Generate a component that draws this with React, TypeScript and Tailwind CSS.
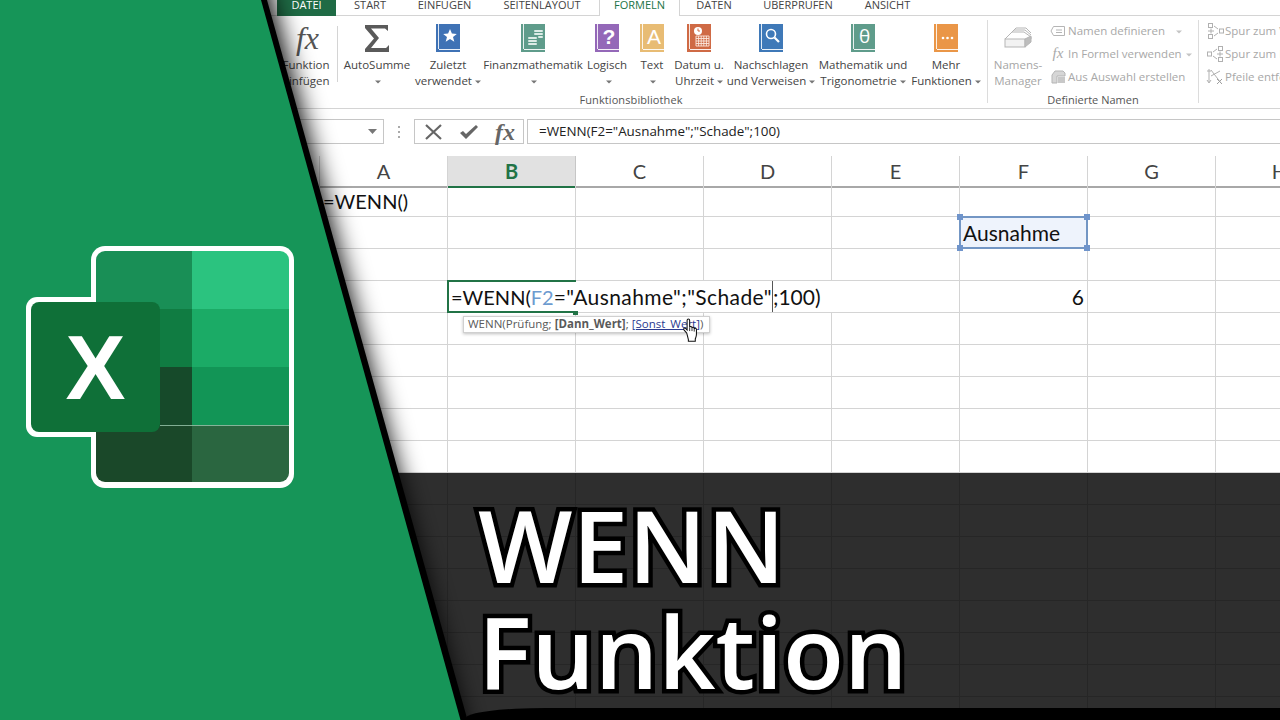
import type { ReactNode } from 'react';

const tabs = [
  { label: 'START', width: 'w-[64px]' },
  { label: 'EINFÜGEN', width: 'w-[85px]' },
  { label: 'SEITENLAYOUT', width: 'w-[110px]' },
];
const tabsRight = [
  { label: 'DATEN', width: 'w-[68px]' },
  { label: 'ÜBERPRÜFEN', width: 'w-[100px]' },
  { label: 'ANSICHT', width: 'w-[79px]' },
];

const columns = ['A', 'B', 'C', 'D', 'E', 'F', 'G', 'H'];
const rows = Array.from({ length: 17 }, (_, i) => i + 1);

const Caret = ({ color = '#777' }: { color?: string }) => (
  <svg width="6" height="4" viewBox="0 0 6 4" className="ml-[3px] inline-block align-middle">
    <path d="M0 0.5h6L3 3.5z" fill={color} />
  </svg>
);

const Book = ({ color, children }: { color: string; children: ReactNode }) => (
  <svg width="24" height="28" viewBox="0 0 24 28">
    <rect width="24" height="28" fill={color} />
    <rect x="2" y="0" width="1" height="25" fill="#fff" opacity="0.85" />
    <rect x="3" y="25" width="21" height="1" fill="#fff" opacity="0.9" />
    {children}
  </svg>
);

const RibbonButton = ({
  icon,
  lines,
  width,
  caret = true,
  muted = false,
}: {
  icon: ReactNode;
  lines: [string, string];
  width: string;
  caret?: boolean;
  muted?: boolean;
}) => (
  <div className={`flex flex-none flex-col items-center pt-2 ${width}`}>
    <div className="flex h-7 items-center justify-center">{icon}</div>
    <div
      className={`mt-[5px] whitespace-nowrap text-center text-[11.5px] leading-4 ${
        muted ? 'text-[#a6a6a6]' : 'text-[#444]'
      }`}
    >
      <div>{lines[0]}</div>
      <div>
        {lines[1]}
        {caret && <Caret />}
      </div>
    </div>
  </div>
);

const SmallRow = ({
  icon,
  text,
  caretGap,
}: {
  icon: ReactNode;
  text: string;
  caretGap?: string;
}) => (
  <div className="flex h-[23px] items-center whitespace-nowrap text-[11.5px] text-[#a8a8a8]">
    <span className="flex w-[20px] flex-none justify-center">{icon}</span>
    <span>{text}</span>
    {caretGap && (
      <span className={caretGap}>
        <Caret color="#c4c4c4" />
      </span>
    )}
  </div>
);

const NameTagIcon = () => (
  <svg width="16" height="12" viewBox="0 0 16 12" fill="none" stroke="#b5b5b5">
    <path d="M3.5 1.5h11v9h-11L1 6z" />
    <path d="M6 5h6M6 7.5h6" />
  </svg>
);
const FormulaTagIcon = () => (
  <span className="relative flex h-4 w-4 items-center justify-center text-[15px] leading-none text-[#aaa] [font-family:'Liberation_Serif',serif] italic">
    fx
  </span>
);
const SelectionIcon = () => (
  <svg width="15" height="14" viewBox="0 0 15 14">
    <path d="M4 1h8l2 2v3H6v7H1V5z" fill="#d6d6d6" stroke="#b5b5b5" />
    <rect x="7" y="7" width="7" height="6" fill="#c8c8c8" />
  </svg>
);
const TraceIcon = ({ flip = false }: { flip?: boolean }) => (
  <svg width="17" height="16" viewBox="0 0 17 16" fill="none" stroke="#b0b0b0" className={flip ? '-scale-x-100' : ''}>
    <rect x="1.5" y="0.5" width="4" height="4" />
    <rect x="1.5" y="11.5" width="4" height="4" />
    <rect x="12.5" y="6" width="4" height="4" />
    <path d="M1 8h6M4 5.5v5M7 3l4 3M7 13l4-3" />
  </svg>
);
const RemoveArrowsIcon = () => (
  <svg width="18" height="18" viewBox="0 0 18 18" fill="none" stroke="#b0b0b0">
    <path d="M3 1v13M1 12l2 3 2-3M1 3h4M5 2l10 13M5 8l9-5" />
    <path d="M11 11l5 5M16 11l-5 5" stroke="#a0a0a0" />
  </svg>
);

const HandCursor = () => (
  <svg width="17" height="26" viewBox="0 0 16 24" className="absolute left-[682px] top-[317px]">
    <path
      d="M4.5 15 2 12.2C1 11 2 9.5 3.4 10.5L4.8 12V3C4.8 1.3 7.2 1.3 7.2 3V9.5C7.2 8.4 9.4 8.4 9.4 9.8V10.2C9.4 9.2 11.5 9.2 11.5 10.6V11C11.5 10.1 13.6 10.2 13.6 11.6V16C13.6 18 13 19 12.5 20.5V22.5H6V21Z"
      fill="#fff"
      stroke="#111"
      strokeWidth="1"
    />
    <path d="M7.2 9.5v3.5M9.4 10v3M11.5 11v2.5" stroke="#111" strokeWidth="0.8" />
  </svg>
);

const Handle = ({ place }: { place: string }) => (
  <span className={`absolute h-[6px] w-[6px] bg-[#6f94cb] ${place}`} />
);

const Cell = ({ row, col }: { row: number; col: string }) => {
  if (row === 4 && col === 'B') {
    return (
      <div className="relative col-span-4 h-8 border-b border-r border-[#d4d4d4] bg-white">
        <div className="absolute -left-px -top-px z-10 h-[33px] w-[129px] border-2 border-r-0 border-[#217346]" />
        <span className="absolute left-[125px] top-[30px] z-10 h-[4px] w-[5px] bg-[#217346]" />
        <div className="flex h-[31px] items-center whitespace-nowrap pl-[3px] text-[20px] text-[#111]">
          =WENN(<span className="text-[#6d9bcf]">F2</span>
          <span className="text-[21px] tracking-[0.4px]">="Ausnahme";"Schade"</span>
          <span className="h-[31px] w-px bg-[#555]" />
          <span className="text-[21px]">;100)</span>
        </div>
      </div>
    );
  }
  if (row === 4 && (col === 'C' || col === 'D' || col === 'E')) return null;

  return (
    <div className="relative h-8 border-b border-r border-[#d4d4d4]">
      {row === 1 && col === 'A' && (
        <div className="flex h-[31px] items-center whitespace-nowrap pl-[3px] text-[20px] text-[#111]">=WENN()</div>
      )}
      {row === 2 && col === 'F' && (
        <div className="absolute -left-px -top-px z-10 flex h-[33px] w-[129px] items-center border-2 border-[#7396c4] bg-[#eef3fc] pl-[2px] text-[21px] text-[#111]">
          Ausnahme
          <Handle place="-left-[4px] -top-[4px]" />
          <Handle place="-right-[4px] -top-[4px]" />
          <Handle place="-bottom-[4px] -left-[4px]" />
          <Handle place="-bottom-[4px] -right-[4px]" />
        </div>
      )}
      {row === 4 && col === 'F' && (
        <div className="flex h-[31px] items-center justify-end pr-[3px] text-[21px] text-[#111]">6</div>
      )}
    </div>
  );
};

const ExcelLogo = () => (
  <svg width="268" height="242" viewBox="26 246 268 242" className="absolute left-[26px] top-[246px]">
    <rect x="91" y="246" width="203" height="242" rx="14" fill="#fff" />
    <rect x="26" y="297" width="90" height="140" rx="11" fill="#fff" />
    <clipPath id="sheet">
      <rect x="96" y="251" width="193" height="231" rx="9" />
    </clipPath>
    <g clipPath="url(#sheet)">
      <rect x="96" y="251" width="96" height="58" fill="#198f56" />
      <rect x="192" y="251" width="97" height="58" fill="#2bc37f" />
      <rect x="96" y="309" width="96" height="58" fill="#107c42" />
      <rect x="192" y="309" width="97" height="58" fill="#1bab66" />
      <rect x="96" y="367" width="96" height="58" fill="#164a2a" />
      <rect x="192" y="367" width="97" height="58" fill="#129556" />
      <rect x="96" y="425" width="96" height="57" fill="#1a4829" />
      <rect x="192" y="425" width="97" height="57" fill="#2a6640" />
      <rect x="160" y="425" width="129" height="0.8" fill="#9bc9ae" />
    </g>
    <rect x="31" y="302" width="129" height="130" rx="8" fill="#0f7038" />
    <text
      x="95.5"
      y="399"
      textAnchor="middle"
      fontFamily="'Liberation Sans', sans-serif"
      fontWeight="700"
      fontSize="90"
      fill="#fff"
    >
      X
    </text>
  </svg>
);

export default function App() {
  return (
    <div className="relative h-[720px] w-[1280px] overflow-hidden bg-white [font-family:'Open_Sans',sans-serif]">
      {/* tabs */}
      <div className="flex h-4 border-b border-[#d4d4d4] pl-[277px] text-[11px] leading-[10px] text-[#444]">
        <div className="h-4 w-[59px] flex-none bg-[#1f6b45] text-center text-white">DATEI</div>
        <div className="w-[2px] flex-none" />
        {tabs.map((t) => (
          <div key={t.label} className={`flex-none text-center ${t.width}`}>
            {t.label}
          </div>
        ))}
        <div className="w-[2px] flex-none" />
        <div className="h-4 w-[81px] flex-none border-x border-[#d4d4d4] bg-white text-center text-[#217346]">
          FORMELN
        </div>
        {tabsRight.map((t) => (
          <div key={t.label} className={`flex-none text-center ${t.width}`}>
            {t.label}
          </div>
        ))}
      </div>

      {/* ribbon */}
      <div className="flex h-[93px] border-b border-[#d4d4d4] pl-[277px]">
        <div className="flex w-[708px] flex-none flex-col">
          <div className="flex h-[77px]">
            <RibbonButton
              width="w-[58px]"
              caret={false}
              lines={['Funktion', 'einfügen']}
              icon={
                <span className="ml-[3px] text-[32px] italic leading-none text-[#555] [font-family:'Liberation_Serif',serif]">
                  fx
                </span>
              }
            />
            <div className="mx-[2px] mt-[10px] h-[56px] w-px flex-none bg-[#d4d4d4]" />
            <RibbonButton
              width="w-[74px]"
              lines={['AutoSumme', '']}
              icon={
                <svg width="24" height="27" viewBox="0 0 24 27">
                  <path d="M0 0H23V6L20 3.5H6L14 13 6 23H21L24 20V27H0V24L9 13.5 0 3Z" fill="#5a5a5a" />
                </svg>
              }
            />
            <RibbonButton
              width="w-[68px]"
              lines={['Zuletzt', 'verwendet']}
              icon={
                <Book color="#3f72b5">
                  <path d="M14 5l1.9 4.6 4.9.3-3.8 3.1 1.3 4.8-4.3-2.7-4.3 2.7 1.3-4.8-3.8-3.1 4.9-.3z" fill="#fff" />
                </Book>
              }
            />
            <RibbonButton
              width="w-[102px]"
              lines={['Finanzmathematik', '']}
              icon={
                <Book color="#5f9c8b">
                  <g fill="#dcebe6">
                    <rect x="7" y="13" width="9" height="2" rx="1" />
                    <rect x="7" y="16" width="9" height="2" rx="1" />
                    <rect x="7" y="19" width="9" height="2" rx="1" />
                    <rect x="13" y="6" width="9" height="2" rx="1" />
                    <rect x="13" y="9" width="9" height="2" rx="1" />
                    <rect x="17" y="12" width="5" height="2" rx="1" />
                  </g>
                </Book>
              }
            />
            <RibbonButton
              width="w-[46px]"
              lines={['Logisch', '']}
              icon={
                <Book color="#9468b8">
                  <text x="14" y="20" textAnchor="middle" fontSize="21" fontWeight="700" fill="#fff" fontFamily="'Liberation Sans', sans-serif">
                    ?
                  </text>
                </Book>
              }
            />
            <RibbonButton
              width="w-[44px]"
              lines={['Text', '']}
              icon={
                <Book color="#e8bc74">
                  <text x="14" y="20" textAnchor="middle" fontSize="21" fill="#fff" fontFamily="'Liberation Sans', sans-serif">
                    A
                  </text>
                </Book>
              }
            />
            <RibbonButton
              width="w-[50px]"
              lines={['Datum u.', 'Uhrzeit']}
              icon={
                <Book color="#cf6a45">
                  <circle cx="11" cy="7" r="4" fill="#fff" />
                  <path d="M11 4.5V7h2" stroke="#cf6a45" fill="none" />
                  <path d="M9 12h13v10H9zM11.6 12v10M14.2 12v10M16.8 12v10M19.4 12v10M9 14.5h13M9 17h13M9 19.5h13" fill="none" stroke="#fbe7dc" strokeWidth="0.9" />
                </Book>
              }
            />
            <RibbonButton
              width="w-[94px]"
              lines={['Nachschlagen', 'und Verweisen']}
              icon={
                <Book color="#3f79b8">
                  <circle cx="12" cy="10" r="4.5" fill="none" stroke="#fff" strokeWidth="1.6" />
                  <path d="M15.5 13.5L20 18" stroke="#fff" strokeWidth="2.2" />
                </Book>
              }
            />
            <RibbonButton
              width="w-[90px]"
              lines={['Mathematik und', 'Trigonometrie']}
              icon={
                <Book color="#5f9c8b">
                  <text x="13.5" y="19" textAnchor="middle" fontSize="19" fill="#fff" fontFamily="'Open Sans', sans-serif">
                    θ
                  </text>
                </Book>
              }
            />
            <RibbonButton
              width="w-[76px]"
              lines={['Mehr', 'Funktionen']}
              icon={
                <Book color="#ea9647">
                  <circle cx="9" cy="14" r="1.3" fill="#fff" />
                  <circle cx="13.5" cy="14" r="1.3" fill="#fff" />
                  <circle cx="18" cy="14" r="1.3" fill="#fff" />
                </Book>
              }
            />
          </div>
          <div className="text-center text-[11px] leading-[14px] tracking-[0.1px] text-[#555]">
            Funktionsbibliothek
          </div>
        </div>

        <div className="ml-[2px] mt-1 h-[83px] w-px flex-none self-start bg-[#dcdcdc]" />

        <div className="flex w-[210px] flex-none flex-col">
          <div className="flex h-[77px]">
            <RibbonButton
              width="w-[60px]"
              caret={false}
              muted
              lines={['Namens-', 'Manager']}
              icon={
                <svg width="28" height="22" viewBox="0 0 28 22" fill="none" stroke="#b5b5b5">
                  <path d="M1 12 8 5h12l7 5v2" />
                  <path d="M4 9l6-6h11l6 5M7 6l5-5h10l5 5" />
                  <rect x="1" y="12" width="20" height="8" fill="#f2f2f2" />
                  <path d="M21 12l6-3v6l-6 5z" fill="#bdbdbd" />
                </svg>
              }
            />
            <div className="pt-[3px]">
              <SmallRow icon={<NameTagIcon />} text="Namen definieren" caretGap="ml-[8px]" />
              <SmallRow icon={<FormulaTagIcon />} text="In Formel verwenden" caretGap="ml-[1px]" />
              <SmallRow icon={<SelectionIcon />} text="Aus Auswahl erstellen" />
            </div>
          </div>
          <div className="text-center text-[11px] leading-[14px] text-[#555]">Definierte Namen</div>
        </div>

        <div className="mt-1 h-[83px] w-px flex-none self-start bg-[#dcdcdc]" />

        <div className="flex-none pl-[6px] pt-[3px]">
          <SmallRow icon={<TraceIcon />} text="Spur zum Vorgänger" />
          <SmallRow icon={<TraceIcon flip />} text="Spur zum Nachfolger" />
          <SmallRow icon={<RemoveArrowsIcon />} text="Pfeile entfernen" />
        </div>
      </div>

      {/* formula bar */}
      <div className="flex h-[47px] items-start pl-[230px] pt-[10px]">
        <div className="flex h-[25px] w-[154px] flex-none items-center justify-end border border-[#c6c6c6] pr-[6px]">
          <svg width="9" height="5" viewBox="0 0 9 5">
            <path d="M0 0h9L4.5 5z" fill="#777" />
          </svg>
        </div>
        <div className="flex h-[25px] w-[30px] flex-none flex-col items-center justify-center gap-[3px]">
          <span className="h-[2px] w-[2px] bg-[#aaa]" />
          <span className="h-[2px] w-[2px] bg-[#aaa]" />
          <span className="h-[2px] w-[2px] bg-[#aaa]" />
        </div>
        <div className="flex h-[25px] w-[110px] flex-none items-center border border-[#c6c6c6]">
          <svg width="17" height="16" viewBox="0 0 17 16" className="ml-[10px]">
            <path d="M1 1l15 14M16 1 1 15" stroke="#666" strokeWidth="2.2" />
          </svg>
          <svg width="20" height="16" viewBox="0 0 20 16" className="ml-[17px]">
            <path d="M1 9l3-2 3 3L17 1l2 2L7 15z" fill="#666" />
          </svg>
          <span className="ml-[16px] text-[24px] font-bold italic leading-none text-[#666] [font-family:'Liberation_Serif',serif]">
            fx
          </span>
        </div>
        <div className="ml-[3px] flex h-[25px] flex-1 items-center border border-r-0 border-[#c6c6c6] pl-[11px] text-[13.4px] text-[#222]">
          =WENN(F2="Ausnahme";"Schade";100)
        </div>
      </div>

      {/* sheet */}
      <div className="[font-family:'Lato',sans-serif]">
        <div className="grid h-[29px] grid-cols-[320px_repeat(8,128px)]">
          <div className="border-b-2 border-r border-b-[#a8a8a8] border-r-[#d4d4d4]" />
          {columns.map((c) =>
            c === 'B' ? (
              <div
                key={c}
                className="flex items-center justify-center border-b-2 border-r border-b-[#217346] border-r-[#c6c6c6] bg-[#e1e1e1] text-[20px] font-bold text-[#217346]"
              >
                {c}
              </div>
            ) : (
              <div
                key={c}
                className="flex items-center justify-center border-b-2 border-r border-b-[#a8a8a8] border-r-[#d4d4d4] text-[20px] text-[#444]"
              >
                {c}
              </div>
            ),
          )}
        </div>
        <div className="grid auto-rows-[32px] grid-cols-[320px_repeat(8,128px)]">
          {rows.map((r) => (
            <div key={r} className="contents">
              <div className="h-8 border-b border-r border-[#d4d4d4]" />
              {columns.map((c) => (
                <Cell key={c} row={r} col={c} />
              ))}
            </div>
          ))}
        </div>
      </div>

      {/* function tooltip */}
      <div className="absolute left-[463px] top-[316px] flex h-[17px] w-[247px] items-center whitespace-nowrap border border-[#d0d0d0] bg-white pb-[2px] pl-[4px] text-[11.5px] text-[#5a5a5a] shadow-[0_1px_3px_rgba(0,0,0,0.25)]">
        WENN(Prüfung;&nbsp;<b>[Dann_Wert]</b>;&nbsp;<span className="text-[#2b3a8f] underline">[Sonst_Wert]</span>)
      </div>
      <HandCursor />

      {/* dark band */}
      <div className="absolute inset-x-0 bottom-0 top-[473px] bg-black/82" />
      <div className="absolute bottom-0 left-[466px] right-0 h-[12px] rounded-tl-[80px_10px] bg-black" />

      {/* green wedge */}
      <svg width="1280" height="720" viewBox="0 0 1280 720" className="absolute left-0 top-0">
        <filter id="wedge-shadow" filterUnits="userSpaceOnUse" x="-100" y="-100" width="800" height="920">
          <feGaussianBlur stdDeviation="12" />
        </filter>
        <polygon points="0,-60 255,-60 480,780 0,780" fill="#000" filter="url(#wedge-shadow)" />
        <polygon points="0,0 267,0 467.5,720 0,720" fill="#000" />
        <polygon points="0,0 261,0 460.5,720 0,720" fill="#169558" />
      </svg>

      <ExcelLogo />

      {/* title */}
      <div className="absolute left-[478px] top-[491px] text-[100px] font-[650] leading-[106px] text-white [-webkit-text-stroke:9px_#000] [font-family:'Open_Sans',sans-serif] [paint-order:stroke_fill]">
        <div>WENN</div>
        <div>Funktion</div>
      </div>
    </div>
  );
}
